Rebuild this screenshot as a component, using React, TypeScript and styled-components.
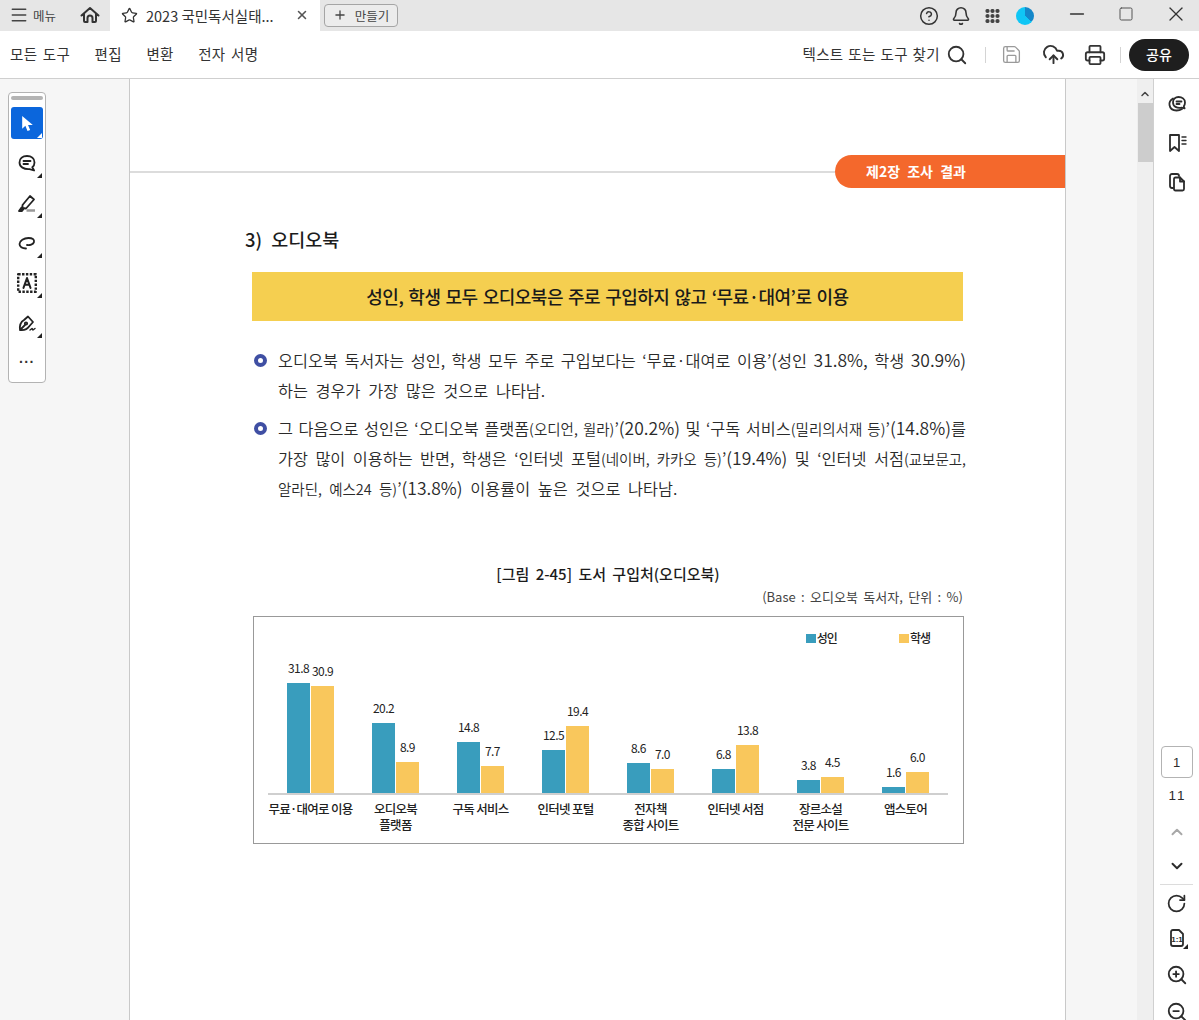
import { ReactNode } from "react";
import styled, { createGlobalStyle } from "styled-components";
import {
  Bell,
  ChevronDown,
  ChevronUp,
  CircleHelp,
  CloudUpload,
  Menu,
  Minus,
  Plus,
  Printer,
  RotateCw,
  Save,
  Search,
  Square,
  Star,
  X,
  ZoomIn,
  ZoomOut,
} from "lucide-react";

const GlobalStyle = createGlobalStyle`
  html, body { margin: 0; padding: 0; height: 100%; overflow: hidden; background: #fff; }
  body { font-family: "Noto Sans CJK KR", "Noto Sans", sans-serif; color: #222; }
`;

const Page = styled.div`
  width: 1199px;
  height: 1020px;
  display: flex;
  flex-direction: column;
  overflow: hidden;
`;

const TitleBar = styled.div`
  height: 31px;
  display: flex;
  align-items: center;
  background: #e6e6e6;
  flex: none;
`;

const MenuButton = styled.div`
  width: 79px;
  display: flex;
  align-items: center;
  gap: 4px;
  padding-left: 9px;
  margin-bottom: 1px;
  box-sizing: border-box;
  font-size: 12.5px;
  color: #444;
`;

const HomeButton = styled.div`
  width: 31px;
  display: flex;
  color: #333;
  padding-left: 1px;
  margin-bottom: 2px;
  box-sizing: border-box;
`;

const ActiveTab = styled.div`
  width: 210px;
  height: 31px;
  background: #fff;
  display: flex;
  align-items: center;
  box-sizing: border-box;
  padding: 0 11px 1px;
  font-size: 14.5px;
  color: #333;
  white-space: nowrap;
`;

const TabTitle = styled.span`
  margin-left: 8px;
  flex: 1;
`;

const CreateButton = styled.div`
  margin: 0 0 1px 4px;
  width: 74px;
  height: 23px;
  box-sizing: border-box;
  border: 1px solid #a5a5a5;
  border-radius: 4px;
  display: flex;
  align-items: center;
  justify-content: center;
  gap: 8px;
  font-size: 12.5px;
  color: #444;
  background: #ececec;
`;

const TitleActions = styled.div`
  margin-left: auto;
  display: flex;
  align-items: center;
  color: #333;
`;

const Avatar = styled.div`
  width: 18px;
  height: 18px;
  border-radius: 50%;
  background: conic-gradient(#1487c9 0 130deg, #10c6f5 130deg 360deg);
  margin: 0 32px 0 7px;
`;

const IconSlot = styled.span<{ $w: number }>`
  width: ${(p) => p.$w}px;
  display: flex;
  justify-content: center;
`;

const WindowSlot = styled(IconSlot)`
  margin-bottom: 4px;
`;

const ToolBar = styled.div`
  height: 48px;
  flex: none;
  box-sizing: border-box;
  display: flex;
  align-items: center;
  border-bottom: 1px solid #cfcfcf;
  background: #fff;
`;

const NavItem = styled.span`
  font-size: 14.5px;
  color: #333;
  margin: 0 0 2px 24.5px;
  letter-spacing: 0.3px;
  word-spacing: 2px;
  &:first-child { margin-left: 10px; }
`;

const ToolRight = styled.div`
  margin-left: auto;
  display: flex;
  align-items: center;
  color: #333;
  padding-right: 10px;
`;

const FindText = styled.span`
  font-size: 14.5px;
  letter-spacing: 0.4px;
  word-spacing: 1px;
  margin: 0 6px 2px 0;
  color: #333;
`;

const Divider = styled.span`
  width: 1px;
  height: 16px;
  background: #d4d4d4;
`;

const ShareButton = styled.div`
  width: 60px;
  height: 32px;
  box-sizing: border-box;
  padding-bottom: 2px;
  border-radius: 16px;
  background: #1e1e1e;
  color: #fff;
  font-size: 14px;
  font-weight: 500;
  display: flex;
  align-items: center;
  justify-content: center;
  margin-left: 8px;
`;

const Body = styled.div`
  flex: 1;
  display: flex;
  min-height: 0;
`;

const LeftRail = styled.div`
  width: 130px;
  flex: none;
  box-sizing: border-box;
  background: #f6f6f6;
  border-right: 1px solid #c9c9c9;
  padding: 13px 0 0 8px;
`;

const ToolBox = styled.div`
  width: 38px;
  height: 291px;
  box-sizing: border-box;
  background: #fff;
  border: 1px solid #b3b3b3;
  border-radius: 4px;
  display: flex;
  flex-direction: column;
  align-items: center;
  padding: 3px 2px 0;
`;

const GrabBar = styled.div`
  width: 32px;
  height: 4px;
  border-radius: 2px;
  background: #b4b4b4;
  margin-bottom: 7px;
`;

const ToolButton = styled.div<{ $active?: boolean }>`
  position: relative;
  width: 32px;
  height: 32px;
  margin-bottom: 8px;
  border-radius: 3px;
  display: flex;
  align-items: center;
  justify-content: center;
  color: ${(p) => (p.$active ? "#fff" : "#222")};
  background: ${(p) => (p.$active ? "#0b66dc" : "transparent")};
`;

const Corner = styled.span<{ $light?: boolean }>`
  position: absolute;
  right: 1px;
  bottom: 1px;
  width: 0;
  height: 0;
  border-left: 5px solid transparent;
  border-bottom: 5px solid ${(p) => (p.$light ? "#fff" : "#222")};
`;

const Dots = styled.div`
  margin-top: 8px;
  font-family: "Liberation Sans", sans-serif;
  font-size: 14px;
  line-height: 14px;
  letter-spacing: 0.6px;
  font-weight: 700;
  color: #333;
`;

const Document = styled.div`
  width: 935px;
  flex: none;
  background: #fff;
  overflow: hidden;
  padding-top: 76px;
  box-sizing: border-box;
`;

const ChapterStrip = styled.div`
  display: flex;
  align-items: center;
  height: 33px;
`;

const ChapterRule = styled.div`
  flex: 1;
  height: 2px;
  background: #dcdcdc;
`;

const ChapterTag = styled.div`
  width: 230px;
  height: 33px;
  box-sizing: border-box;
  background: #f4682c;
  border-radius: 17px 0 0 17px;
  color: #fff;
  font-family: "Noto Sans CJK KR", serif;
  font-size: 14px;
  font-weight: 700;
  word-spacing: 4px;
  padding-left: 31px;
  line-height: 33px;
`;

const Content = styled.div`
  margin-left: 122px;
  width: 712px;
`;

const SectionTitle = styled.h2`
  margin: 38px 0 0 -7px;
  font-size: 18.5px;
  line-height: 26px;
  font-weight: 500;
  word-spacing: 5px;
  color: #1c1c1c;
`;

const Banner = styled.div`
  margin-top: 20px;
  width: 711px;
  height: 49px;
  box-sizing: border-box;
  padding-bottom: 1px;
  background: #f5cf50;
  display: flex;
  align-items: center;
  justify-content: center;
  font-size: 18px;
  font-weight: 500;
  letter-spacing: -0.5px;
  word-spacing: 1.5px;
  color: #1a1a1a;
`;

const BulletList = styled.div`
  margin-top: 24px;
  display: flex;
  flex-direction: column;
  gap: 8px;
`;

const BulletItem = styled.div`
  display: flex;
  align-items: flex-start;
`;

const BulletMark = styled.span`
  width: 13px;
  height: 13px;
  box-sizing: border-box;
  border: 4px solid #3f4fa3;
  border-radius: 50%;
  margin: 9px 11px 0 2px;
  flex: none;
`;

const BulletText = styled.div`
  width: 688px;
  flex: none;
  font-size: 16.3px;
  font-weight: 350;
  color: #2a2a2a;
`;

const Line = styled.div<{ $fit?: boolean }>`
  height: 30px;
  line-height: 30px;
  white-space: ${(p) => (p.$fit ? "normal" : "nowrap")};
  text-align: ${(p) => (p.$fit ? "justify" : "left")};
  text-align-last: ${(p) => (p.$fit ? "justify" : "left")};
  word-spacing: ${(p) => (p.$fit ? 1 : 4)}px;
`;

const Small = styled.span`
  font-size: 14.5px;
  line-height: 0;
`;

const Num = styled.span`
  font-size: 17.5px;
  line-height: 0;
`;

const FigureTitle = styled.div`
  margin-top: 60px;
  text-align: center;
  font-size: 15px;
  line-height: 22px;
  font-weight: 500;
  word-spacing: 3px;
  color: #1c1c1c;
`;

const BaseNote = styled.div`
  margin-top: 2px;
  text-align: right;
  padding-right: 1px;
  font-size: 13px;
  line-height: 20px;
  color: #444;
  word-spacing: 2.5px;
`;

const Chart = styled.div`
  margin: 9px 0 0 1px;
  width: 711px;
  height: 228px;
  box-sizing: border-box;
  border: 1px solid #999;
  padding: 13px 15px 0 14px;
`;

const Legend = styled.div`
  height: 16px;
  display: flex;
  justify-content: flex-end;
  gap: 62px;
  padding-right: 18px;
`;

const LegendItem = styled.span`
  display: flex;
  align-items: center;
  gap: 1px;
  font-size: 12px;
  letter-spacing: -1px;
  font-weight: 500;
  line-height: 16px;
  color: #222;
`;

const Swatch = styled.span<{ $c: string }>`
  width: 10px;
  height: 9px;
  background: ${(p) => p.$c};
`;

const Plot = styled.div`
  display: flex;
  height: 147px;
  border-bottom: 2px solid #cfcfcf;
  box-sizing: content-box;
`;

const Group = styled.div`
  width: 85px;
  display: flex;
  justify-content: center;
  align-items: flex-end;
  gap: 1px;
`;

const BarColumn = styled.div`
  width: 23px;
  display: flex;
  flex-direction: column;
  align-items: center;
`;

const BarValue = styled.span`
  font-size: 12px;
  letter-spacing: -0.6px;
  line-height: 15px;
  margin-bottom: 8px;
  color: #222;
  white-space: nowrap;
`;

const Bar = styled.div<{ $c: string }>`
  width: 23px;
  background: ${(p) => p.$c};
`;

const AxisLabels = styled.div`
  display: flex;
  margin-top: 6px;
`;

const AxisLabel = styled.div`
  width: 85px;
  text-align: center;
  font-size: 12.5px;
  font-weight: 500;
  letter-spacing: -0.7px;
  line-height: 16px;
  color: #222;
  white-space: pre-line;
`;

const Gutter = styled.div`
  width: 72px;
  flex: none;
  box-sizing: border-box;
  background: #f6f6f6;
  border-left: 1px solid #c9c9c9;
`;

const ScrollTrack = styled.div`
  width: 16px;
  flex: none;
  background: #efefef;
  display: flex;
  flex-direction: column;
  align-items: center;
  color: #444;
  padding-top: 9px;
  box-sizing: border-box;
`;

const ScrollThumb = styled.div`
  width: 15px;
  height: 59px;
  margin-top: 3px;
  background: #cdcdcd;
`;

const RightRail = styled.div`
  width: 46px;
  flex: none;
  box-sizing: border-box;
  border-left: 1px solid #d0d0d0;
  background: #fff;
  display: flex;
  flex-direction: column;
  align-items: center;
  color: #2c2c2c;
  padding-top: 13px;
  overflow: hidden;
`;

const RailIcon = styled.div<{ $gap: number }>`
  position: relative;
  flex: none;
  width: 24px;
  height: 24px;
  display: flex;
  align-items: center;
  justify-content: center;
  margin-bottom: ${(p) => p.$gap}px;
`;

const PageBox = styled.div`
  flex: none;
  margin-top: 552px;
  width: 32px;
  height: 32px;
  box-sizing: border-box;
  border: 1px solid #b3b3b3;
  border-radius: 4px;
  display: flex;
  align-items: center;
  justify-content: center;
  font-family: "Liberation Sans", sans-serif;
  font-size: 13px;
`;

const PageCount = styled.div`
  flex: none;
  font-family: "Liberation Sans", sans-serif;
  font-size: 13.5px;
  letter-spacing: 2px;
  padding-left: 2px;
  line-height: 16px;
  margin: 10px 0 16px;
`;

const RailRule = styled.div`
  flex: none;
  width: 33px;
  height: 1px;
  background: #dcdcdc;
  margin: 6px 0 6px;
`;

const ScaleLabel = styled.text`
  font-family: "Liberation Sans", sans-serif;
  font-size: 8px;
  font-weight: 700;
  fill: currentColor;
  stroke: none;
`;

const svgProps = {
  fill: "none",
  stroke: "currentColor",
  strokeWidth: 1.8,
  strokeLinecap: "round" as const,
  strokeLinejoin: "round" as const,
};

const Glyph = ({ children, size = 20 }: { children: ReactNode; size?: number }) => (
  <svg width={size} height={size} viewBox="0 0 20 20" {...svgProps}>
    {children}
  </svg>
);

const tools: ReactNode[] = [
  <Glyph key="comment">
    <path d="M10 3c4.400 0 7.500 2.600 7.500 6.400 0 2.200-1 3.800-2.200 4.800l1.800 3.300-4.600-1.400C7 16.500 2.500 14 2.500 9.400 2.500 5.600 5.600 3 10 3z" />
    <path d="M6.500 8h7M6.500 11h4.500" />
  </Glyph>,
  <Glyph key="highlight">
    <path d="M5.500 12 13 3l4 3.500-8 9-3.500-.5z" />
    <path d="M2 18l2.500-3.500 2 1.500L5 18z" fill="currentColor" />
    <path d="M9.500 17.500H18" stroke="#999" strokeWidth={2.5} strokeLinecap="butt" />
  </Glyph>,
  <Glyph key="lasso">
    <path d="M9 15.500C5 15.500 2.500 13.500 2.500 11 2.500 7.500 7 5 11.500 5 15.500 5 17.500 6.500 17 9c-.5 2.500-4.500 3.500-7 3" />
  </Glyph>,
  <Glyph key="text" size={22}>
    <path d="M2 2h16v16H2z" strokeDasharray="2.200 1.300" strokeLinecap="butt" strokeWidth={2.2} />
    <path d="M6.800 14.500 10 5.500l3.200 9M8 11.500h4" strokeWidth={1.8} />
  </Glyph>,
  <Glyph key="sign">
    <path d="M3 17c-.5-4 .5-8 4-10l4-3.500 5 5.500-3.500 4c-2 3-5.500 4.500-9.500 4zM3 17l5-5" />
    <circle cx="9" cy="10.500" r="1.200" />
    <path d="M13 17l2-1.500 1 1.500 2-1.500" strokeWidth={1.4} />
  </Glyph>,
];

const series = [
  { label: "무료·대여로 이용", adult: 31.8, student: 30.9 },
  { label: "오디오북\n플랫폼", adult: 20.2, student: 8.9 },
  { label: "구독 서비스", adult: 14.8, student: 7.7 },
  { label: "인터넷 포털", adult: 12.5, student: 19.4 },
  { label: "전자책\n종합 사이트", adult: 8.6, student: 7.0 },
  { label: "인터넷 서점", adult: 6.8, student: 13.8 },
  { label: "장르소설\n전문 사이트", adult: 3.8, student: 4.5 },
  { label: "앱스토어", adult: 1.6, student: 6.0 },
];

const ADULT = "#399dbd";
const STUDENT = "#f9c75c";

const App = () => (
  <Page>
    <GlobalStyle />
    <TitleBar>
      <MenuButton>
        <Menu size={20} strokeWidth={1.8} />
        메뉴
      </MenuButton>
      <HomeButton>
        <svg width="20" height="20" viewBox="0 0 20 20" {...svgProps} strokeWidth={2}>
          <path d="M1.500 10.500 10 3l8.500 7.500M4 8.500V16a1 1 0 0 0 1 1h2.500v-4a2.500 2.500 0 0 1 5 0v4H15a1 1 0 0 0 1-1V8.500" />
        </svg>
      </HomeButton>
      <ActiveTab>
        <Star size={17} strokeWidth={1.8} />
        <TabTitle>2023 국민독서실태...</TabTitle>
        <X size={14} strokeWidth={2.6} color="#555" />
      </ActiveTab>
      <CreateButton>
        <Plus size={14} strokeWidth={2.2} />
        만들기
      </CreateButton>
      <TitleActions>
        <IconSlot $w={32}>
          <CircleHelp size={20} strokeWidth={1.8} />
        </IconSlot>
        <IconSlot $w={32}>
          <Bell size={20} strokeWidth={1.9} />
        </IconSlot>
        <IconSlot $w={32}>
          <svg width="16" height="14" viewBox="0 0 16 14" fill="#444">
            {[2, 7, 12].flatMap((y) =>
              [2.5, 7.5, 12.5].map((x) => <circle key={`${x}-${y}`} cx={x} cy={y} r="2.100" />),
            )}
          </svg>
        </IconSlot>
        <Avatar />
        <WindowSlot $w={22}>
          <Minus size={26} strokeWidth={1.6} />
        </WindowSlot>
        <WindowSlot $w={75}>
          <Square size={16} strokeWidth={1.5} color="#555" />
        </WindowSlot>
        <WindowSlot $w={26}>
          <X size={24} strokeWidth={1.3} />
        </WindowSlot>
        <IconSlot $w={10} />
      </TitleActions>
    </TitleBar>
    <ToolBar>
      <NavItem>모든 도구</NavItem>
      <NavItem>편집</NavItem>
      <NavItem>변환</NavItem>
      <NavItem>전자 서명</NavItem>
      <ToolRight>
        <FindText>텍스트 또는 도구 찾기</FindText>
        <Search size={22} strokeWidth={2} />
        <IconSlot $w={17} />
        <Divider />
        <IconSlot $w={50}>
          <Save size={21} strokeWidth={1.5} color="#9a9a9a" />
        </IconSlot>
        <IconSlot $w={34}>
          <CloudUpload size={23} strokeWidth={2} />
        </IconSlot>
        <IconSlot $w={50}>
          <Printer size={22} strokeWidth={2} />
        </IconSlot>
        <Divider />
        <ShareButton>공유</ShareButton>
      </ToolRight>
    </ToolBar>
    <Body>
      <LeftRail>
        <ToolBox>
          <GrabBar />
          <ToolButton $active>
            <svg width="15" height="17" viewBox="0 0 14 16" fill="#fff">
              <path d="M2 1v12l3-3 2 5 2.500-1-2-4.500h4.500z" />
            </svg>
            <Corner $light />
          </ToolButton>
          {tools.map((tool, i) => (
            <ToolButton key={i}>
              {tool}
              <Corner />
            </ToolButton>
          ))}
          <Dots>···</Dots>
        </ToolBox>
      </LeftRail>
      <Document>
        <ChapterStrip>
          <ChapterRule />
          <ChapterTag>제2장 조사 결과</ChapterTag>
        </ChapterStrip>
        <Content>
          <SectionTitle>3) 오디오북</SectionTitle>
          <Banner>성인, 학생 모두 오디오북은 주로 구입하지 않고 ‘무료·대여’로 이용</Banner>
          <BulletList>
            <BulletItem>
              <BulletMark />
              <BulletText>
                <Line $fit>
                  오디오북 독서자는 성인, 학생 모두 주로 구입보다는 ‘무료·대여로 이용’<Num>(</Num>성인 <Num>31.8%,</Num> 학생 <Num>30.9%)</Num>
                </Line>
                <Line>하는 경우가 가장 많은 것으로 나타남.</Line>
              </BulletText>
            </BulletItem>
            <BulletItem>
              <BulletMark />
              <BulletText>
                <Line $fit>
                  그 다음으로 성인은 ‘오디오북 플랫폼<Small>(오디언, 윌라)</Small>’<Num>(20.2%)</Num> 및 ‘구독 서비스<Small>(밀리의서재 등)</Small>’<Num>(14.8%)</Num>를
                </Line>
                <Line $fit>
                  가장 많이 이용하는 반면, 학생은 ‘인터넷 포털<Small>(네이버, 카카오 등)</Small>’<Num>(19.4%)</Num> 및 ‘인터넷 서점<Small>(교보문고,</Small>
                </Line>
                <Line>
                  <Small>알라딘, 예스24 등)</Small>’<Num>(13.8%)</Num> 이용률이 높은 것으로 나타남.
                </Line>
              </BulletText>
            </BulletItem>
          </BulletList>
          <FigureTitle>[그림 2-45] 도서 구입처(오디오북)</FigureTitle>
          <BaseNote>(Base : 오디오북 독서자, 단위 : %)</BaseNote>
          <Chart>
            <Legend>
              <LegendItem>
                <Swatch $c={ADULT} />
                성인
              </LegendItem>
              <LegendItem>
                <Swatch $c={STUDENT} />
                학생
              </LegendItem>
            </Legend>
            <Plot>
              {series.map((s) => (
                <Group key={s.label}>
                  {[
                    { v: s.adult, c: ADULT },
                    { v: s.student, c: STUDENT },
                  ].map((b) => (
                    <BarColumn key={b.c}>
                      <BarValue>{b.v.toFixed(1)}</BarValue>
                      <Bar $c={b.c} style={{ height: b.v * 3.46 }} />
                    </BarColumn>
                  ))}
                </Group>
              ))}
            </Plot>
            <AxisLabels>
              {series.map((s) => (
                <AxisLabel key={s.label}>{s.label}</AxisLabel>
              ))}
            </AxisLabels>
          </Chart>
        </Content>
      </Document>
      <Gutter />
      <ScrollTrack>
        <ChevronUp size={12} strokeWidth={3} />
        <ScrollThumb />
      </ScrollTrack>
      <RightRail>
        <RailIcon $gap={15}>
          <svg width="20" height="20" viewBox="0 0 20 20" {...svgProps}>
            <path d="M6 4.500C3.500 6 2 8 2.500 11c.5 3 3 5.500 7 5.500 2 0 4-.5 5.500-1.500" />
            <path d="M11.500 3C15 3 18 5 18 8.500c0 1.800-.6 3-1.200 3.800l.8 2-3.100-.6C10 14.500 6 12.500 6 8.500 6 5 8.500 3 11.500 3z" />
            <path d="M9.500 7.500h5M9.500 10h3" />
          </svg>
        </RailIcon>
        <RailIcon $gap={15}>
          <svg width="22" height="22" viewBox="0 0 22 22" {...svgProps}>
            <path d="M4 3h9v16l-4.500-4L4 19z" />
            <path d="M16 5h4M16 8.500h4M16 12h4" strokeWidth={1.4} />
          </svg>
        </RailIcon>
        <RailIcon $gap={0}>
          <svg width="20" height="20" viewBox="0 0 20 20" {...svgProps}>
            <path d="M6 16H5c-1.500 0-2-1-2-2V4c0-1.500 1-2 2-2h5c1 0 2 .5 2 2" />
            <path d="M7 7c0-1 .5-1.500 1.500-1.500H13l4 4V17c0 1-.5 1.500-1.500 1.500h-7C7.500 18.500 7 18 7 17z" />
            <path d="M13 5.500V9.500h4" />
          </svg>
        </RailIcon>
        <PageBox>1</PageBox>
        <PageCount>11</PageCount>
        <RailIcon $gap={10}>
          <ChevronUp size={18} strokeWidth={2.6} color="#a8a8a8" />
        </RailIcon>
        <RailIcon $gap={0}>
          <ChevronDown size={18} strokeWidth={2.6} />
        </RailIcon>
        <RailRule />
        <RailIcon $gap={11}>
          <RotateCw size={21} strokeWidth={2} />
        </RailIcon>
        <RailIcon $gap={13}>
          <svg width="20" height="20" viewBox="0 0 20 20" {...svgProps}>
            <path d="M4 4c0-1 .5-2 2-2h6l4 4v10c0 1.500-1 2-2 2H6c-1.500 0-2-.5-2-2z" />
            <ScaleLabel x="10" y="14" textAnchor="middle">1:1</ScaleLabel>
          </svg>
          <Corner />
        </RailIcon>
        <RailIcon $gap={13}>
          <ZoomIn size={22} strokeWidth={2} />
        </RailIcon>
        <RailIcon $gap={0}>
          <ZoomOut size={22} strokeWidth={2} />
        </RailIcon>
      </RightRail>
    </Body>
  </Page>
);

export default App;
